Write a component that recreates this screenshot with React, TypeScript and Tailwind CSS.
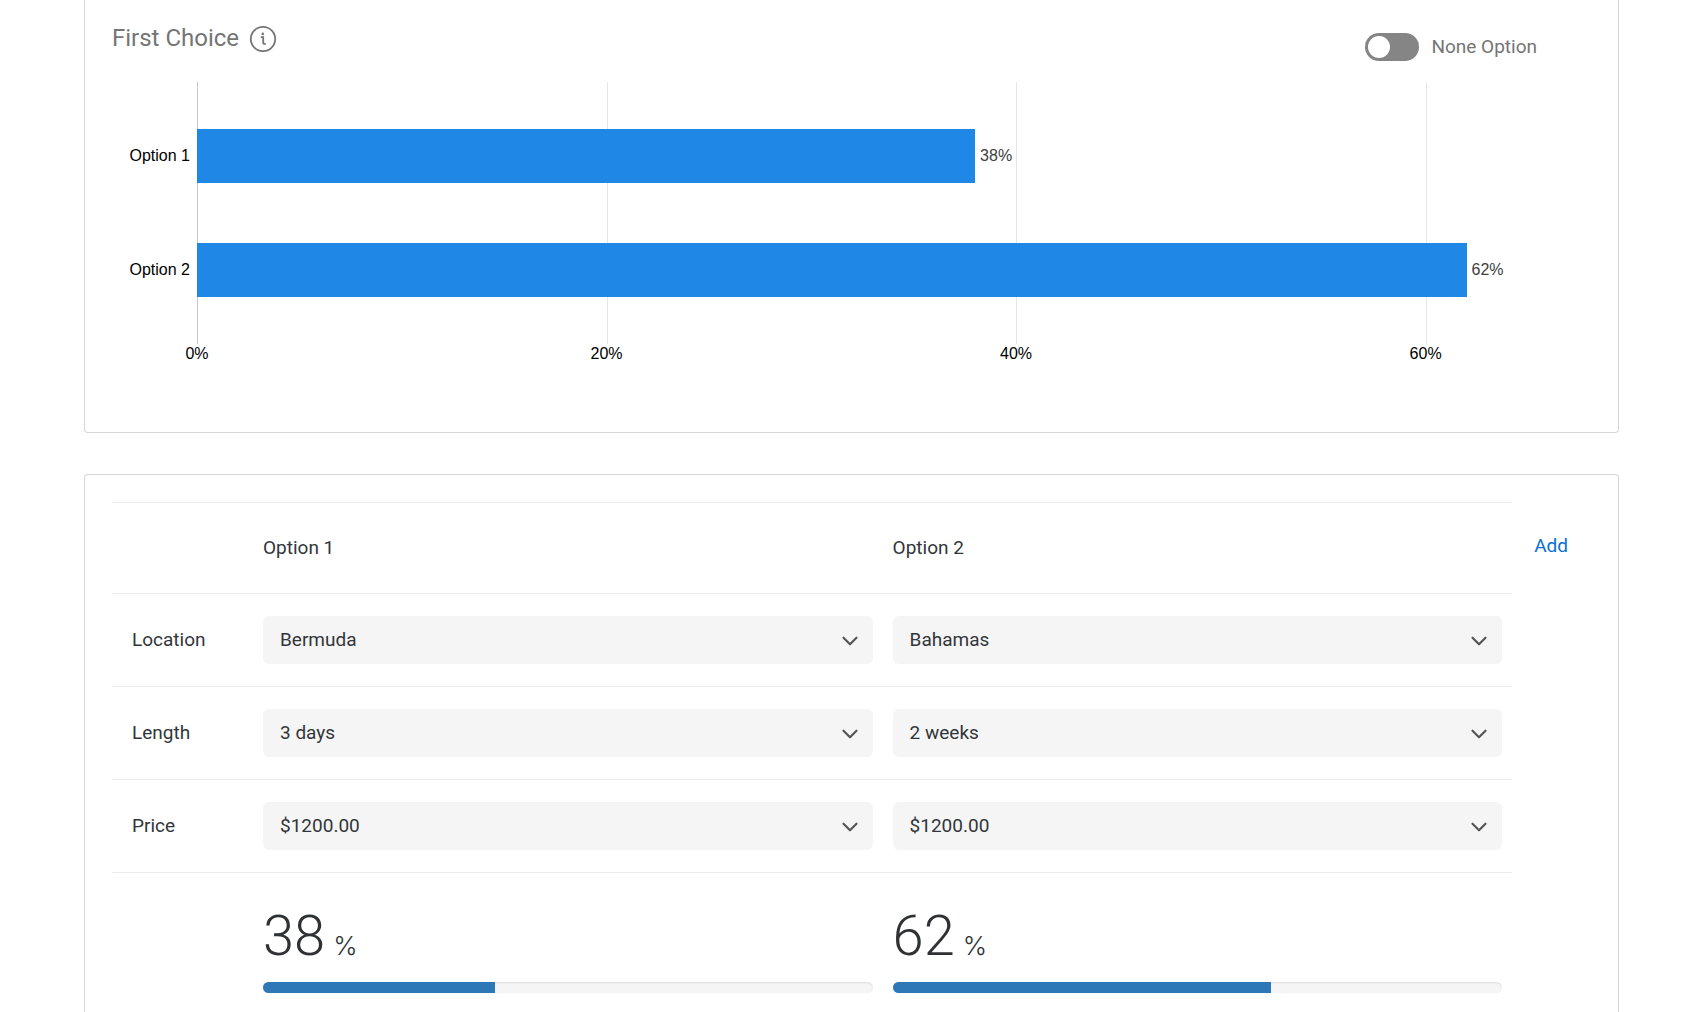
import { useState } from "react";
import { ChevronDown } from "lucide-react";

const AXIS_MAX = 65;
const TICKS = [0, 20, 40, 60];

const options = [
  { name: "Option 1", share: 38 },
  { name: "Option 2", share: 62 },
];

const features = [
  { name: "Location", levels: ["Bermuda", "Bahamas"], initial: ["Bermuda", "Bahamas"] },
  { name: "Length", levels: ["3 days", "2 weeks"], initial: ["3 days", "2 weeks"] },
  { name: "Price", levels: ["$1200.00"], initial: ["$1200.00", "$1200.00"] },
];

function InfoIcon() {
  return (
    <svg width="28" height="28" viewBox="0 0 28 28" fill="none" stroke="#757575" strokeWidth="1.8">
      <circle cx="14" cy="14" r="12.2" />
      <path d="M11.8 12.2h2.4v5.2c0 1.2.7 1.8 2.6 1.4" />
      <circle cx="13.8" cy="8.9" r="1.3" fill="#757575" stroke="none" />
    </svg>
  );
}

function NoneToggle() {
  const [on, setOn] = useState(false);
  return (
    <label className="flex cursor-pointer items-center gap-3 text-[19px] leading-7 text-[#757575]">
      <input
        type="checkbox"
        checked={on}
        onChange={(e) => setOn(e.target.checked)}
        className="h-7 w-[54px] cursor-pointer appearance-none rounded-full bg-[#858585] p-[3px] before:block before:size-[22px] before:rounded-full before:bg-white checked:bg-[#0b6ed0] checked:before:ml-auto"
      />
      None Option
    </label>
  );
}

function ShareChart() {
  return (
    <div className="flex pr-[90px] font-['Liberation_Sans',Arial,sans-serif] text-base text-black">
      <div className="flex w-[85px] flex-col gap-[60px] pt-[47px] pr-[7px] text-right">
        {options.map((o) => (
          <div key={o.name} className="h-[54px] leading-[54px]">
            {o.name}
          </div>
        ))}
      </div>
      <div className="flex-1">
        <div className="relative h-[262px]">
          <div className="absolute inset-0 grid grid-cols-[20fr_20fr_20fr_5fr]">
            {TICKS.map((t) => (
              <div key={t} className="border-l border-[#e6e6e6] first:border-[#c8c8c8]" />
            ))}
          </div>
          <div className="relative flex flex-col gap-[60px] pt-[47px]">
            {options.map((o) => (
              <div key={o.name} className="flex h-[54px] items-center gap-[5px]">
                <div
                  className="h-full bg-[#1f88e7]"
                  style={{ width: `${(o.share / AXIS_MAX) * 100}%` }}
                />
                <span className="text-[#404040]">{o.share}%</span>
              </div>
            ))}
          </div>
        </div>
        <div className="grid grid-cols-[20fr_20fr_20fr_5fr] leading-5">
          {TICKS.map((t) => (
            <span key={t} className="w-fit -translate-x-1/2">
              {t}%
            </span>
          ))}
        </div>
      </div>
    </div>
  );
}

function LevelSelect({ label, levels, initial }: { label: string; levels: string[]; initial: string }) {
  return (
    <div className="relative">
      <select
        aria-label={label}
        defaultValue={initial}
        className="block h-12 w-full appearance-none rounded-md bg-[#f5f5f5] px-[17px] text-[#32363a]"
      >
        {levels.map((l) => (
          <option key={l}>{l}</option>
        ))}
      </select>
      <ChevronDown
        size={26}
        strokeWidth={2}
        className="pointer-events-none absolute top-3 right-2.5 text-[#555]"
      />
    </div>
  );
}

function Simulator() {
  return (
    <table className="flex-1 table-fixed text-left text-[19px] text-[#32363a]">
      <thead>
        <tr className="h-[91px] border-y border-[#ececec]">
          <td className="w-[141px]" />
          {options.map((o) => (
            <th key={o.name} scope="col" className="px-2.5 font-normal">
              {o.name}
            </th>
          ))}
        </tr>
      </thead>
      <tbody>
        {features.map((f) => (
          <tr key={f.name} className="h-[93px] border-b border-[#ececec]">
            <th scope="row" className="pl-5 font-normal">
              {f.name}
            </th>
            {options.map((o, i) => (
              <td key={o.name} className="px-2.5">
                <LevelSelect label={`${f.name}, ${o.name}`} levels={f.levels} initial={f.initial[i]} />
              </td>
            ))}
          </tr>
        ))}
        <tr>
          <td />
          {options.map((o) => (
            <td key={o.name} className="px-2.5 pt-7">
              <div className="flex h-[70px] items-baseline gap-2 leading-[70px] text-[#2f3234]">
                <span className="text-[56px] font-light">{o.share}</span>
                <span className="font-[Inter,sans-serif] text-[26px] font-light">%</span>
              </div>
              <div className="mt-[11px] h-[11px] overflow-hidden rounded-full bg-[#f5f5f5] shadow-[inset_0_1px_2px_rgba(0,0,0,0.1)]">
                <div className="h-full bg-[#2f78b7]" style={{ width: `${o.share}%` }} />
              </div>
            </td>
          ))}
        </tr>
      </tbody>
    </table>
  );
}

export default function App() {
  return (
    <main className="flex min-h-screen flex-col gap-[41px] bg-white pr-[81px] pl-21 font-[Roboto,'Liberation_Sans',sans-serif]">
      <section className="rounded-b border border-t-0 border-[#d6d6d6] pb-[68px] pl-[27px]">
        <header className="flex h-[82px] items-start justify-between pr-[81px]">
          <div className="flex items-center gap-2.5 pt-[22px]">
            <h1 className="text-2xl text-[#757575]">First Choice</h1>
            <button type="button" aria-label="About first choice" className="pt-0.5">
              <InfoIcon />
            </button>
          </div>
          <div className="pt-[33px]">
            <NoneToggle />
          </div>
        </header>
        <ShareChart />
      </section>

      <section className="flex flex-1 items-start rounded-t border border-b-0 border-[#d6d6d6] pt-[27px] pr-[50px] pl-[27px]">
        <Simulator />
        <button type="button" className="mt-[30px] ml-[22px] text-[19px] text-[#0b6ed0]">
          Add
        </button>
      </section>
    </main>
  );
}
